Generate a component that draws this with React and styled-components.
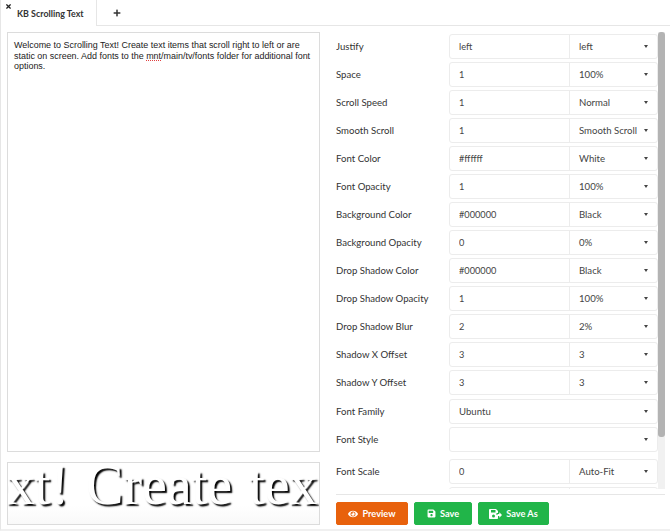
import React from "react";
import styled, { createGlobalStyle } from "styled-components";
import { FaEye, FaSave, FaPlus, FaTimes } from "react-icons/fa";

const GlobalStyle = createGlobalStyle`
  html, body {
    margin: 0;
    padding: 0;
    background: #fff;
  }
  body {
    font-family: "Lato", "Liberation Sans", sans-serif;
  }
`;

const Page = styled.div`
  width: 670px;
  height: 531px;
  overflow: hidden;
  display: flex;
  flex-direction: column;
  box-sizing: border-box;
  border-left: 1px solid #e6e6e6;
  border-bottom: 2px solid #f0f0f0;
`;

const TabBar = styled.div`
  height: 25px;
  border-bottom: 1px solid #e6e6e6;
  display: flex;
  align-items: stretch;
  flex-shrink: 0;
`;

const Tab = styled.div`
  width: 96px;
  margin-bottom: -1px;
  border-right: 1px solid #e6e6e6;
  background: #fff;
  position: relative;
  font-size: 8.9px;
  font-weight: 700;
  color: #333;
  white-space: nowrap;
  display: flex;
  align-items: center;
  padding-left: 16px;
  box-sizing: border-box;
`;

const TabClose = styled.span`
  position: absolute;
  left: 4px;
  top: 3px;
  display: flex;
  font-size: 7px;
  color: #222;
`;

const AddTab = styled.div`
  margin-left: 16px;
  display: flex;
  align-items: center;
  font-size: 8px;
  color: #333;
`;

const Body = styled.div`
  flex: 1;
  display: flex;
  padding: 6px 5px 4px 6px;
  gap: 16px;
  min-height: 0;
`;

const LeftColumn = styled.div`
  width: 313px;
  display: flex;
  flex-direction: column;
  gap: 10px;
`;

const TextBox = styled.div`
  flex: 1;
  border: 1px solid #dcdcdc;
  padding: 7px 6px;
  font-family: "Liberation Sans", Arial, sans-serif;
  font-size: 8.95px;
  line-height: 10.6px;
  color: #222;
`;

const Misspelled = styled.span`
  text-decoration: underline dotted #e04040;
`;

const PreviewBox = styled.div`
  height: 63px;
  box-sizing: border-box;
  border: 1px solid #dcdcdc;
  overflow: hidden;
  background: linear-gradient(#fff 70%, #f9f9f9);
`;

const PreviewText = styled.div`
  margin-left: -26px;
  white-space: nowrap;
  font-family: "Liberation Serif", "Times New Roman", serif;
  font-size: 56px;
  word-spacing: 3px;
  line-height: 44px;
  color: #fff;
  text-shadow: 2px 2px 1.5px #000;
`;

const RightColumn = styled.div`
  flex: 1;
  display: flex;
  flex-direction: column;
  min-width: 0;
`;

const FormArea = styled.div`
  height: 457px;
  overflow: hidden;
  position: relative;
  padding-top: 2px;
  box-sizing: border-box;
`;

const Track = styled.div`
  position: absolute;
  right: 0;
  top: 0;
  bottom: 0;
  width: 7px;
  background: #f1f1f1;
`;

const Thumb = styled.div`
  position: absolute;
  right: 0;
  top: 0;
  width: 7px;
  height: 405px;
  border-radius: 3px;
  background: #b3b3b3;
`;

const Row = styled.div`
  display: flex;
  align-items: center;
  height: 25px;
  margin-bottom: ${(p) => p.$gap ?? 3}px;
  width: 322px;
`;

const Label = styled.div`
  width: 113px;
  flex-shrink: 0;
  font-size: 9.6px;
  color: #333;
  white-space: nowrap;
`;

const Field = styled.div`
  flex: 1;
  height: 100%;
  display: flex;
  border: 1px solid #ececec;
  border-radius: 3px;
  box-sizing: border-box;
  background: #fff;
`;

const ValueInput = styled.input`
  width: 119px;
  box-sizing: border-box;
  border: none;
  outline: none;
  padding: 0 9px;
  background: transparent;
  font-family: inherit;
  font-size: 9.2px;
  color: #444;
`;

const Select = styled.div`
  flex: 1;
  display: flex;
  align-items: center;
  padding: 0 9px;
  font-size: 9.6px;
  color: #444;
  border-left: ${(p) => (p.$full ? "none" : "1px solid #ececec")};
`;

const Caret = styled.span`
  margin-left: auto;
  width: 0;
  height: 0;
  border-left: 2.5px solid transparent;
  border-right: 2.5px solid transparent;
  border-top: 3px solid #444;
`;

const Separator = styled.div`
  height: 1px;
  background: #e6e6e6;
  margin-top: 5px;
`;

const Actions = styled.div`
  display: flex;
  gap: 6px;
  margin-top: 7px;
`;

const ActionButton = styled.button`
  height: 23px;
  width: ${(p) => p.$width}px;
  border: 1px solid ${(p) => p.$color};
  border-radius: 2px;
  background: ${(p) => p.$color};
  color: #fff;
  font-family: inherit;
  font-size: 9.2px;
  font-weight: 700;
  display: flex;
  align-items: center;
  justify-content: center;
  gap: 4px;
  padding: 0;
`;

const rows = [
  { label: "Justify", value: "left", option: "left" },
  { label: "Space", value: "1", option: "100%" },
  { label: "Scroll Speed", value: "1", option: "Normal" },
  { label: "Smooth Scroll", value: "1", option: "Smooth Scroll" },
  { label: "Font Color", value: "#ffffff", option: "White" },
  { label: "Font Opacity", value: "1", option: "100%" },
  { label: "Background Color", value: "#000000", option: "Black" },
  { label: "Background Opacity", value: "0", option: "0%" },
  { label: "Drop Shadow Color", value: "#000000", option: "Black" },
  { label: "Drop Shadow Opacity", value: "1", option: "100%" },
  { label: "Drop Shadow Blur", value: "2", option: "2%" },
  { label: "Shadow X Offset", value: "3", option: "3" },
  { label: "Shadow Y Offset", value: "3", option: "3", gap: 4 },
  { label: "Font Family", option: "Ubuntu" },
  { label: "Font Style", option: "", gap: 7 },
  { label: "Font Scale", value: "0", option: "Auto-Fit" },
  { label: "", value: "", option: "" },
];

const SaveAsIcon = () => (
  <svg width="13" height="10" viewBox="0 0 13 10" fill="currentColor">
    <path d="M1 0h6l2 2v2H7.500v2H9v3.200c0 .4-.3.8-.8.8H1c-.5 0-1-.4-1-.8V1c0-.5.5-1 1-1zm1 1v2.500h4.500V1zm2.500 4.500a1.500 1.500 0 1 0 0 3 1.500 1.500 0 0 0 0-3z" />
    <path d="M8.500 5h1.800V3.200L13 6l-2.700 2.800V7H8.500z" />
  </svg>
);

export default function App() {
  return (
    <Page>
      <GlobalStyle />
      <TabBar>
        <Tab>
          <TabClose>
            <FaTimes />
          </TabClose>
          KB Scrolling Text
        </Tab>
        <AddTab>
          <FaPlus />
        </AddTab>
      </TabBar>
      <Body>
        <LeftColumn>
          <TextBox>
            Welcome to Scrolling Text! Create text items that scroll right to
            left or are static on screen. Add fonts to the{" "}
            <Misspelled>mnt</Misspelled>/main/tv/fonts folder for additional
            font options.
          </TextBox>
          <PreviewBox>
            <PreviewText>ext! Create tex</PreviewText>
          </PreviewBox>
        </LeftColumn>
        <RightColumn>
          <FormArea>
            {rows.map((row, i) => (
              <Row key={i} $gap={row.gap}>
                <Label>{row.label}</Label>
                <Field>
                  {row.value !== undefined && (
                    <ValueInput readOnly value={row.value} />
                  )}
                  <Select $full={row.value === undefined}>
                    {row.option}
                    <Caret />
                  </Select>
                </Field>
              </Row>
            ))}
            <Track />
            <Thumb />
          </FormArea>
          <Separator />
          <Actions>
            <ActionButton $width={72} $color="#e8610c">
              <FaEye size={10} />
              Preview
            </ActionButton>
            <ActionButton $width={58} $color="#21b549">
              <FaSave size={9} />
              Save
            </ActionButton>
            <ActionButton $width={71} $color="#21b549">
              <SaveAsIcon />
              Save As
            </ActionButton>
          </Actions>
        </RightColumn>
      </Body>
    </Page>
  );
}
